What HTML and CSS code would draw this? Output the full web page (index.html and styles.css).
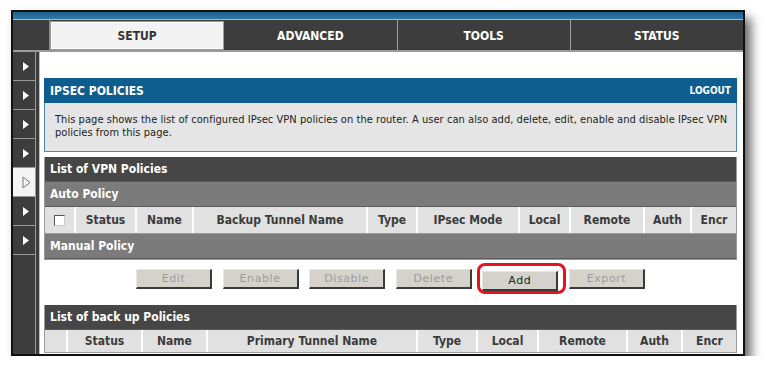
FILE: index.html
```html
<!DOCTYPE html>
<html>
<head>
<meta charset="utf-8">
<link rel="stylesheet" href="styles.css">
</head>
<body>
<div class="frame">
  <div class="topband"></div>
  <div class="tabbar">
    <div class="tab-corner"></div>
    <div class="tab active"><span>SETUP</span></div>
    <div class="tab">ADVANCED</div>
    <div class="tab">TOOLS</div>
    <div class="tab">STATUS</div>
  </div>
  <div class="main">
    <nav class="sidebar">
      <div class="side-list">
        <div class="side-item"><svg class="arr" width="6" height="9" viewBox="0 0 6 9"><path d="M0 0L6 4.5L0 9Z" fill="#fff"/></svg></div>
        <div class="side-item"><svg class="arr" width="6" height="9" viewBox="0 0 6 9"><path d="M0 0L6 4.5L0 9Z" fill="#fff"/></svg></div>
        <div class="side-item"><svg class="arr" width="6" height="9" viewBox="0 0 6 9"><path d="M0 0L6 4.5L0 9Z" fill="#fff"/></svg></div>
        <div class="side-item"><svg class="arr" width="6" height="9" viewBox="0 0 6 9"><path d="M0 0L6 4.5L0 9Z" fill="#fff"/></svg></div>
        <div class="side-item selected"><svg class="arr-open" width="9" height="13" viewBox="0 0 9 13"><path d="M1 1L8 6.5L1 12Z" fill="none" stroke="#777" stroke-width="1"/></svg></div>
        <div class="side-item"><svg class="arr" width="6" height="9" viewBox="0 0 6 9"><path d="M0 0L6 4.5L0 9Z" fill="#fff"/></svg></div>
        <div class="side-item"><svg class="arr" width="6" height="9" viewBox="0 0 6 9"><path d="M0 0L6 4.5L0 9Z" fill="#fff"/></svg></div>
      </div>
      <div class="side-edge"></div>
    </nav>
    <div class="content">
      <div class="panel">
        <div class="panel-head">
          <span class="ph-title">IPSEC POLICIES</span>
          <span class="ph-logout">LOGOUT</span>
        </div>
        <div class="desc">This page shows the list of configured IPsec VPN policies on the router. A user can also add, delete, edit, enable and disable IPsec VPN policies from this page.</div>

        <section class="tbl first">
          <div class="bar dark">List of VPN Policies</div>
          <div class="bar mid">Auto Policy</div>
          <div class="hrow auto">
            <div class="hc"><span class="chk"></span></div>
            <div class="hc">Status</div>
            <div class="hc">Name</div>
            <div class="hc">Backup Tunnel Name</div>
            <div class="hc">Type</div>
            <div class="hc">IPsec Mode</div>
            <div class="hc">Local</div>
            <div class="hc">Remote</div>
            <div class="hc">Auth</div>
            <div class="hc">Encr</div>
          </div>
          <div class="bar mid">Manual Policy</div>
        </section>

        <div class="buttons">
          <button class="btn">Edit</button>
          <button class="btn">Enable</button>
          <button class="btn">Disable</button>
          <button class="btn">Delete</button>
          <div class="hl-wrap"><button class="btn on">Add</button><span class="hl"></span></div>
          <button class="btn">Export</button>
        </div>

        <section class="tbl">
          <div class="bar dark">List of back up Policies</div>
          <div class="hrow backup">
            <div class="hc"></div>
            <div class="hc">Status</div>
            <div class="hc">Name</div>
            <div class="hc">Primary Tunnel Name</div>
            <div class="hc">Type</div>
            <div class="hc">Local</div>
            <div class="hc">Remote</div>
            <div class="hc">Auth</div>
            <div class="hc">Encr</div>
          </div>
        </section>
      </div>
    </div>
  </div>
</div>
</body>
</html>
```
FILE: styles.css
```css
* { box-sizing: border-box; }
html, body { margin: 0; background: #fff; }
body {
  padding: 10px 0 0 11px;
  font-family: "DejaVu Sans Condensed", "DejaVu Sans", sans-serif;
  font-stretch: condensed;
}
.frame {
  width: 734px;
  height: 346px;
  border: 2px solid #111;
  background: #fff;
  box-shadow: 6px 8px 10px rgba(0,0,0,0.6);
  display: flex;
  flex-direction: column;
  overflow: hidden;
}
.topband {
  height: 8px;
  background: linear-gradient(#1f5f8c, #2d78a8);
  border-bottom: 1px solid #a9b9c6;
  flex: none;
}
.tabbar {
  height: 32px;
  flex: none;
  display: flex;
  background: #3d3d3d;
  border-bottom: 2px solid #9a9a9a;
}
.tab-corner {
  width: 37px;
  border-right: 1px solid #8c8c8c;
}
.tab {
  flex: 1;
  display: flex;
  align-items: center;
  justify-content: center;
  color: #fff;
  font-weight: bold;
  font-size: 12px;
  border-right: 1px solid #a0a0a0;
  padding-top: 1px;
}
.tab:last-child { border-right: none; }
.tab.active {
  background: #f3f3f3;
  color: #333;
  border: 1px solid #9a9a9a;
  box-shadow: inset 0 0 0 1px #fff;
  margin: 1px 0 0 0;
}
.main {
  flex: 1;
  display: flex;
  min-height: 0;
}
.sidebar {
  width: 27px;
  flex: none;
  display: flex;
  background: #3d3d3d;
}
.side-list {
  width: 23px;
  display: flex;
  flex-direction: column;
  border-right: 1px solid #9a9a9a;
}
.side-item {
  height: 29px;
  border-bottom: 1px solid #9a9a9a;
  display: flex;
  align-items: center;
  justify-content: center;
  padding-left: 4px;
}
.side-item.selected { background: #f4f4f4; }
.side-edge {
  width: 4px;
  background: #3d3d3d;
  border-right: 1px solid #bbb;
}
.content {
  flex: 1;
  padding: 26px 5px 0 4px;
}
.panel { width: 693px; }
.panel-head {
  height: 25px;
  background: #0e5d8f;
  display: flex;
  align-items: center;
  justify-content: space-between;
  padding: 0 6px 0 6px;
  color: #fff;
  font-weight: bold;
  font-size: 12px;
}
.ph-logout { font-size: 10px; }
.desc {
  height: 49px;
  background: #e5e5e5;
  border: 1px solid #4f87b3;
  border-top: none;
  padding: 10px 2px 0 10px;
  font-size: 11px;
  line-height: 13px;
  letter-spacing: 0.05px;
  color: #222;
}
.tbl {
  border: 1px solid #9a9a9a;
  border-top: none;
}
.tbl.first { margin-top: 5px; }
.bar {
  height: 25px;
  display: flex;
  align-items: center;
  padding-left: 5px;
  color: #fff;
  font-weight: bold;
  font-size: 12px;
  border-bottom: 1px solid #5c5c5c;
}
.bar.dark { background: #464646; }
.bar.mid { background: #7b7b7b; }
.hrow {
  display: grid;
  column-gap: 2px;
  background: #fff;
  border-bottom: 1px solid #9a9a9a;
}
.hrow.auto {
  height: 27px;
  grid-template-columns: 29px 59px 55px 172px 48px 100px 49px 72px 45px 1fr;
}
.hrow.backup {
  height: 22px;
  grid-template-columns: 21px 73px 63px 208px 58px 59px 87px 53px 1fr;
  border-bottom: none;
}
.hc {
  background: #e1e1e1;
  display: flex;
  align-items: center;
  justify-content: center;
  font-weight: bold;
  font-size: 12px;
  color: #3b3b3b;
}
.chk {
  width: 11px;
  height: 11px;
  background: #fff;
  border: 1px solid #555;
  border-right-color: #ccc;
  border-bottom-color: #ccc;
  margin-left: -1px;
}
.buttons {
  height: 45px;
  display: flex;
  align-items: center;
  gap: 10.6px;
  padding: 0 0 8px 92px;
}
.btn {
  width: 76px;
  height: 20px;
  padding: 0;
  background: #d5d2cc;
  border: 1px solid #e8e6e2;
  border-right: 2px solid #3a3a3a;
  border-bottom: 2px solid #3a3a3a;
  color: #9c9c9c;
  font-family: "DejaVu Sans", sans-serif;
  font-size: 11px;
  letter-spacing: 0.6px;
  flex: none;
}
.btn.on { color: #222; }
.hl-wrap {
  position: relative;
  width: 76px;
  height: 20px;
  flex: none;
}
.hl {
  position: absolute;
  left: -5px;
  top: -6px;
  right: -8px;
  bottom: -5px;
  border: 3px solid #e3141f;
  border-radius: 8px;
}
```
